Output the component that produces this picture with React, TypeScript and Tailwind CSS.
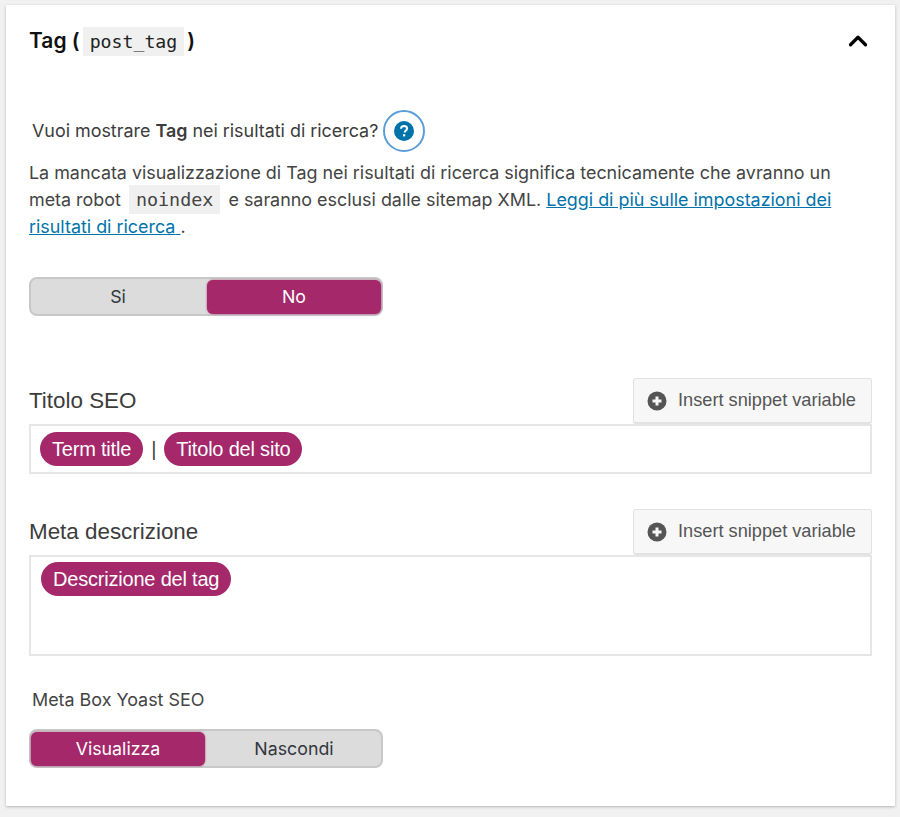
import { ChevronUp } from "lucide-react"

const sysFont = "font-['Inter','Liberation_Sans',sans-serif]"
const helv = "font-['Liberation_Sans',Arial,sans-serif]"

function Toggle({ left, right, active }: { left: string; right: string; active: "left" | "right" }) {
  const on = "bg-[#a4286a] text-white rounded-[6px] shadow-[0_0_2px_#a4286a]"
  const off = "text-[#32373c]"
  return (
    <div className={`flex h-[39px] w-[354px] gap-[2px] rounded-[8px] border-2 border-[#c8c8c8] bg-[#dcdcdc] pt-px text-[17.8px] ${sysFont}`}>
      <div className={`flex flex-1 items-center justify-center ${active === "left" ? on : off}`}>{left}</div>
      <div className={`flex flex-1 items-center justify-center ${active === "right" ? on : off}`}>{right}</div>
    </div>
  )
}

function Pill({ children }: { children: string }) {
  return (
    <span className={`inline-flex h-[34px] items-center rounded-full bg-[#a4286a] px-3 text-[20px] tracking-[-0.2px] text-white ${helv}`}>
      {children}
    </span>
  )
}

function SnippetHeader({ label }: { label: string }) {
  return (
    <div className="flex items-end justify-between">
      <span className={`pb-[9px] text-[22.4px] leading-[28px] text-[#3c3c3c] ${helv}`}>{label}</span>
      <button className={`flex h-[46px] w-[239px] items-center rounded-[3px] border border-[#e2e2e2] border-b-2 bg-[#f7f7f7] pl-[13px] text-[18.2px] text-[#555] ${helv}`}>
        <svg width="20" height="20" viewBox="0 0 20 20" className="mr-[11px]">
          <circle cx="10" cy="10" r="9.5" fill="#555" />
          <path d="M10 5.5v9M5.5 10h9" stroke="#f7f7f7" strokeWidth="3" />
        </svg>
        Insert snippet variable
      </button>
    </div>
  )
}

export default function App() {
  return (
    <div className={`min-h-[817px] bg-[#f1f1f1] pt-[5px] pr-[5px] pb-[11px] pl-[6px] ${sysFont}`}>
      <div className="h-[801px] rounded-[1px] bg-white pr-[23px] pl-[23px] shadow-[0_1px_3px_rgba(0,0,0,0.25)]">
        <header className="flex items-center justify-between pt-[21px]">
          <h2 className="flex items-center text-[21px] leading-[30px] font-semibold text-[#111]">
            Tag (
            <code className="mx-[3px] bg-[#f0f0f0] px-[7px] font-['DejaVu_Sans_Mono',monospace] text-[18.2px] leading-[29px] font-normal text-[#222]">
              post_tag
            </code>
            )
          </h2>
          <ChevronUp className="-mr-[1px] text-black" size={30} strokeWidth={2.6} />
        </header>

        <div className="mt-[54px] ml-[3px] flex items-center text-[17.9px] text-[#3c3c3c]">
          <span>
            Vuoi mostrare <strong className="font-semibold">Tag</strong> nei risultati di ricerca?
          </span>
          <span className="ml-[5px] flex h-[42px] w-[42px] items-center justify-center rounded-full border-2 border-[#5b9dd9]">
            <svg width="20" height="20" viewBox="0 0 20 20">
              <circle cx="10" cy="10" r="10" fill="#0073aa" />
              <path d="M7 7.8c0-1.7 1.3-2.8 3.1-2.8 1.8 0 3 1 3 2.5 0 2-2.4 2.1-2.4 4" fill="none" stroke="#fff" strokeWidth="2" />
              <rect x="9" y="13.2" width="2.2" height="2.2" fill="#fff" />
            </svg>
          </span>
        </div>

        <p className="mt-[7px] text-[17.9px] leading-[27px] text-[#444]">
          La mancata visualizzazione di Tag nei risultati di ricerca significa tecnicamente che avranno un meta robot{" "}
          <code className="mx-[3px] bg-[#f0f0f0] px-[7px] py-[4px] font-['DejaVu_Sans_Mono',monospace] text-[18.4px] leading-none text-[#444]">noindex</code>{" "}
          e saranno esclusi dalle sitemap XML.{" "}
          <a href="#" className="text-[#0073aa] underline">
            Leggi di più sulle impostazioni dei risultati di ricerca{" "}
          </a>
          .
        </p>

        <div className="mt-[37px]">
          <Toggle left="Si" right="No" active="right" />
        </div>

        <div className="mt-[62px]">
          <SnippetHeader label="Titolo SEO" />
          <div className="flex h-[50px] items-center gap-[8px] border-2 border-[#e6e6e6] pl-[9px]">
            <Pill>Term title</Pill>
            <span className={`text-[20px] text-[#444] ${helv}`}>|</span>
            <Pill>Titolo del sito</Pill>
          </div>
        </div>

        <div className="mt-[35px]">
          <SnippetHeader label="Meta descrizione" />
          <div className="h-[101px] border-2 border-[#e6e6e6] pt-[5px] pl-[10px]">
            <Pill>Descrizione del tag</Pill>
          </div>
        </div>

        <div className="mt-[32px] ml-[3px] text-[17.9px] leading-[24px] text-[#444]">Meta Box Yoast SEO</div>
        <div className="mt-[17px]">
          <Toggle left="Visualizza" right="Nascondi" active="left" />
        </div>
      </div>
    </div>
  )
}
